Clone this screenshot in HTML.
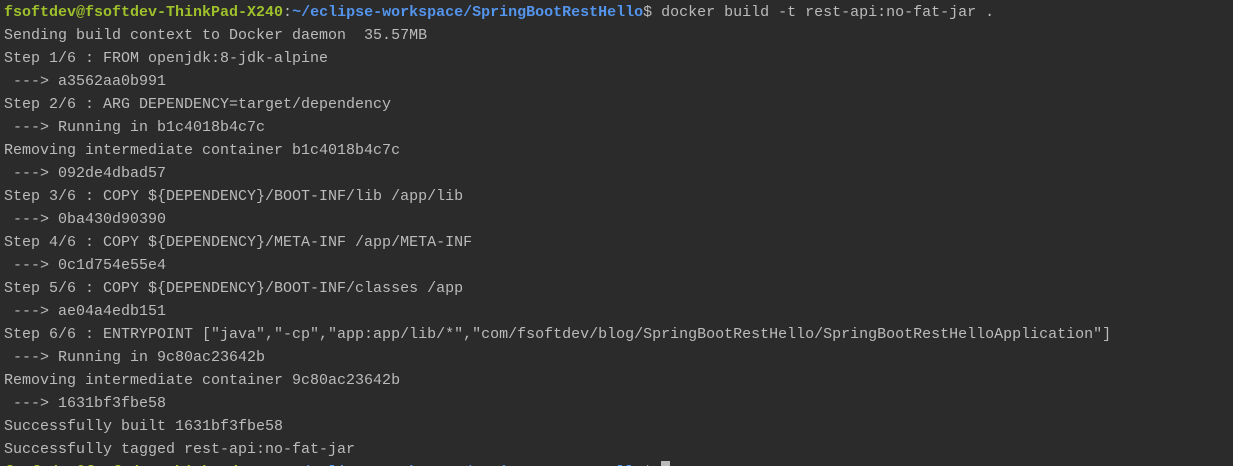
<!DOCTYPE html>
<html><head><meta charset="utf-8"><style>
html,body{margin:0;padding:0;background:#2b2b2b;width:1233px;height:466px;overflow:hidden}
pre{margin:0;padding:1px 0 0 4px;font-family:"Liberation Mono",monospace;font-size:15px;line-height:23px;color:#bbbbbb;white-space:pre}
.g{color:#9fc12b;font-weight:bold}.b{color:#5394ec;font-weight:bold}
.c{display:inline-block;width:9px;height:18px;background:#bbbbbb;vertical-align:-3px}
</style></head><body><pre><span class="g">fsoftdev@fsoftdev-ThinkPad-X240</span>:<span class="b">~/eclipse-workspace/SpringBootRestHello</span>$ docker build -t rest-api:no-fat-jar .
Sending build context to Docker daemon  35.57MB
Step 1/6 : FROM openjdk:8-jdk-alpine
 ---&gt; a3562aa0b991
Step 2/6 : ARG DEPENDENCY=target/dependency
 ---&gt; Running in b1c4018b4c7c
Removing intermediate container b1c4018b4c7c
 ---&gt; 092de4dbad57
Step 3/6 : COPY ${DEPENDENCY}/BOOT-INF/lib /app/lib
 ---&gt; 0ba430d90390
Step 4/6 : COPY ${DEPENDENCY}/META-INF /app/META-INF
 ---&gt; 0c1d754e55e4
Step 5/6 : COPY ${DEPENDENCY}/BOOT-INF/classes /app
 ---&gt; ae04a4edb151
Step 6/6 : ENTRYPOINT ["java","-cp","app:app/lib/*","com/fsoftdev/blog/SpringBootRestHello/SpringBootRestHelloApplication"]
 ---&gt; Running in 9c80ac23642b
Removing intermediate container 9c80ac23642b
 ---&gt; 1631bf3fbe58
Successfully built 1631bf3fbe58
Successfully tagged rest-api:no-fat-jar
<span class="g">fsoftdev@fsoftdev-ThinkPad-X240</span>:<span class="b">~/eclipse-workspace/SpringBootRestHello</span>$ <span class="c"></span></pre></body></html>
